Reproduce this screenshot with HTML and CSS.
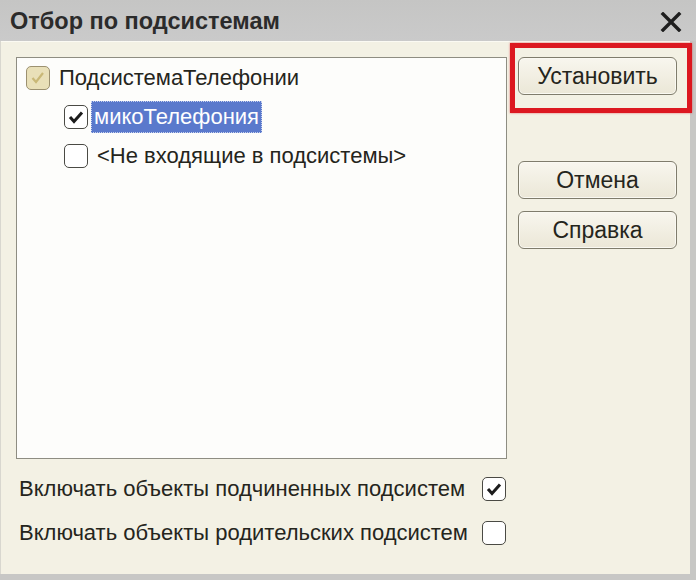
FILE: index.html
```html
<!DOCTYPE html>
<html lang="ru">
<head>
<meta charset="utf-8">
<link rel="stylesheet" href="styles.css">
</head>
<body>
<div class="screen">
  <div class="titlebar">
    <span class="title">Отбор по подсистемам</span>
    <span class="close">
      <svg width="22" height="20" viewBox="0 0 22 20"><path d="M3 2 L19 18 M19 2 L3 18" stroke="#1e1e1e" stroke-width="3.4" stroke-linecap="square"/></svg>
    </span>
  </div>
  <div class="window">
    <div class="leftcol">
      <div class="tree">
        <div class="row lvl0">
          <span class="cb cb-disabled"><svg width="22" height="22" viewBox="0 0 22 22"><path d="M5.5 11 L9 15 L16 6" fill="none" stroke="#c9b877" stroke-width="2.2"/></svg></span>
          <span class="label">ПодсистемаТелефонии</span>
        </div>
        <div class="row lvl1">
          <span class="cb"><svg width="22" height="22" viewBox="0 0 22 22"><path d="M5 11 L9 15.5 L17 6.5" fill="none" stroke="#1c1c1c" stroke-width="3"/></svg></span>
          <span class="label selected">микоТелефония</span>
        </div>
        <div class="row lvl1">
          <span class="cb"></span>
          <span class="label">&lt;Не входящие в подсистемы&gt;</span>
        </div>
      </div>
      <div class="option">
        <span class="optlabel">Включать объекты подчиненных подсистем</span>
        <span class="cb"><svg width="22" height="22" viewBox="0 0 22 22"><path d="M5 11 L9 15.5 L17 6.5" fill="none" stroke="#1c1c1c" stroke-width="3"/></svg></span>
      </div>
      <div class="option">
        <span class="optlabel">Включать объекты родительских подсистем</span>
        <span class="cb"></span>
      </div>
    </div>
    <div class="rightcol">
      <div class="highlightwrap">
        <button class="btn">Установить</button>
        <span class="redbox"></span>
      </div>
      <button class="btn btn-cancel">Отмена</button>
      <button class="btn">Справка</button>
    </div>
  </div>
</div>
</body>
</html>
```

FILE: styles.css
```css
html, body {
  margin: 0;
  padding: 0;
  background: #c7c7c5;
}
.screen {
  width: 696px;
  height: 580px;
  background: #c7c7c5;
  font-family: "Liberation Sans", Arial, sans-serif;
  color: #25251c;
}
.titlebar {
  height: 41px;
  display: flex;
  align-items: center;
  justify-content: space-between;
  padding: 0 14px 0 10px;
  box-sizing: border-box;
  background: linear-gradient(#c5c5c4, #cacaca);
}
.title {
  font-weight: bold;
  font-size: 23.5px;
  color: #2b2b2b;
  padding-top: 2px;
}
.close {
  display: flex;
  padding-top: 3px;
}
.window {
  width: 690px;
  height: 533px;
  box-sizing: border-box;
  background: #f3f1e4;
  border-left: 1px solid #d8d7cf;
  display: flex;
  padding: 16px 0 0 15px;
  box-shadow: inset 0 1px 0 #fbfaf3;
}
.leftcol {
  width: 491px;
  display: flex;
  flex-direction: column;
}
.tree {
  height: 402px;
  box-sizing: border-box;
  background: #fdfdfb;
  border: 1px solid #8e8d82;
  padding-top: 0;
}
.row {
  display: flex;
  align-items: center;
  height: 39px;
}
.row.lvl1 { height: 39.5px; }
.lvl0 { padding-left: 9px; }
.lvl1 { padding-left: 47px; }
.cb {
  width: 24px;
  height: 24px;
  box-sizing: border-box;
  border: 1.5px solid #4a4a44;
  border-radius: 5px;
  background: #ffffff;
  display: flex;
  align-items: center;
  justify-content: center;
  flex: none;
}
.cb svg { display: block; }
.cb-disabled {
  background: #e9e0b8;
  border-color: #9c9170;
}
.label {
  font-size: 22px;
  margin-left: 6px;
  line-height: 30px;
  padding: 0 3px;
}
.selected {
  background: #5a79cc;
  color: #ffffff;
  outline: 1px dotted #c8d2ee;
  outline-offset: -1px;
  margin-left: 3px;
  height: 32px;
  line-height: 32px;
}
.option {
  display: flex;
  align-items: center;
  height: 24px;
  margin-top: 18px;
  padding-left: 3px;
}
.option + .option { margin-top: 20px; }
.optlabel {
  font-size: 22px;
  width: 463px;
}
.rightcol {
  display: flex;
  flex-direction: column;
  margin-left: 11px;
  width: 159px;
}
.highlightwrap {
  position: relative;
  height: 38px;
  margin-bottom: 66px;
}
.btn {
  width: 159px;
  height: 38px;
  box-sizing: border-box;
  border: 1px solid #7f7c6c;
  border-radius: 6px;
  background: linear-gradient(#f8f6ee, #ebe7d7);
  box-shadow: inset 0 0 0 1px #faf9f2;
  font-family: "Liberation Sans", Arial, sans-serif;
  font-size: 23px;
  color: #25251c;
  padding: 0;
  display: block;
}
.btn-cancel { margin-bottom: 12px; }
.redbox {
  position: absolute;
  left: -8px;
  top: -14px;
  width: 182px;
  height: 70px;
  box-sizing: border-box;
  border: 5px solid #dc1820;
  box-shadow: 0 0 2px rgba(220,24,32,0.6);
}
```
